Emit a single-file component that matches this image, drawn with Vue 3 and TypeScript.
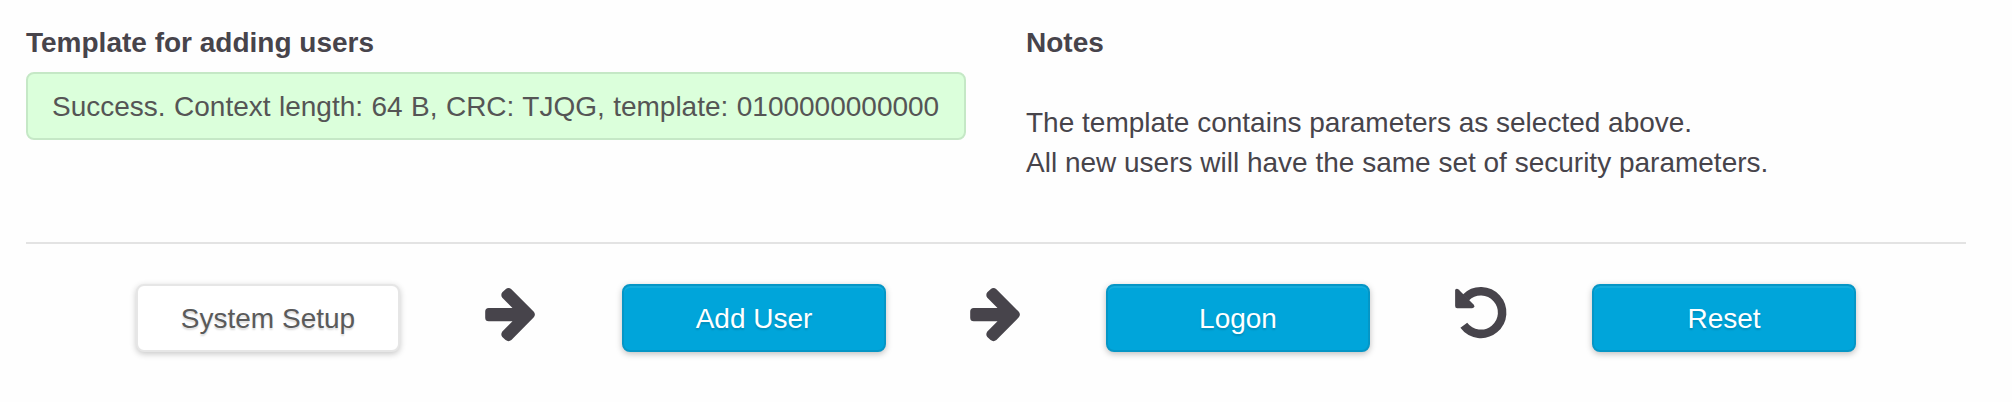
<script setup lang="ts">
interface Step {
  label: string
  primary: boolean
  next?: 'arrow' | 'undo'
}

const status = 'Success. Context length: 64 B, CRC: TJQG, template: 0100000000000'

const steps: Step[] = [
  { label: 'System Setup', primary: false, next: 'arrow' },
  { label: 'Add User', primary: true, next: 'arrow' },
  { label: 'Logon', primary: true, next: 'undo' },
  { label: 'Reset', primary: true },
]
</script>

<template>
  <main class="page">
    <section class="info">
      <div class="template">
        <h2 class="title">Template for adding users</h2>
        <div class="status"><span>{{ status }}</span></div>
      </div>
      <div class="notes">
        <h2 class="title">Notes</h2>
        <p class="text">
          <span class="line">The template contains parameters as selected above.</span>
          <span class="line">All new users will have the same set of security parameters.</span>
        </p>
      </div>
    </section>
    <nav class="steps">
      <template v-for="step in steps" :key="step.label">
        <div class="cell">
          <button type="button" class="button" :class="{ primary: step.primary }">{{ step.label }}</button>
        </div>
        <div v-if="step.next" class="cell">
          <svg v-if="step.next === 'arrow'" class="icon" width="56" height="60" viewBox="0 0 56 60">
            <path d="M5.700 24H29.500L19.300 13.800Q17.300 10.800 19.300 8.200L22.600 5.200Q25.500 2.900 28.400 5.200L50.600 27.600Q53.200 30.600 50.600 33.600L28.400 56Q25.500 58.300 22.600 56L19.300 53Q17.300 50.400 19.300 47.400L29.500 37.200H5.700Q2.200 37.200 2.200 33.700V27.500Q2.200 24 5.700 24Z" />
          </svg>
          <svg v-else class="icon" width="56" height="60" viewBox="0 0 56 60">
            <path class="ring" d="M10.800 41.300A21.300 21.300 0 1 0 12.900 13.400" />
            <path d="M2.100 6.600Q2.100 4.700 3.800 4.700Q4.700 4.700 5.600 5.500L20.300 20.200Q21.300 21.300 21.300 22.300Q21.100 24.300 19 24.300H4.300Q2.100 24.300 2.100 22.100Z" />
          </svg>
        </div>
      </template>
    </nav>
  </main>
</template>

<style>
body {
  margin: 0;
  background: #fefefe;
}
</style>

<style scoped>
.page {
  box-sizing: border-box;
  height: 402px;
  padding: 23px 46px 0 26px;
  font: 28px/40px "Liberation Sans", Arial, sans-serif;
  color: #47444b;
  overflow: hidden;
}
.info {
  box-sizing: border-box;
  display: grid;
  grid-template-columns: 940px 1fr;
  column-gap: 60px;
  height: 221px;
  border-bottom: 2px solid #e3e3e3;
}
.title {
  margin: 0;
  font-size: 28px;
  font-weight: 700;
  line-height: 40px;
}
.status {
  box-sizing: border-box;
  height: 68px;
  margin-top: 9px;
  padding: 0 24px;
  border: 2px solid #c5e8c6;
  border-radius: 8px;
  background: #dbffdb;
  color: #555;
  line-height: 66px;
  word-spacing: 0.65px;
  white-space: nowrap;
}
.text {
  margin: 40px 0 0;
}
.line {
  display: block;
  white-space: nowrap;
}
.steps {
  display: grid;
  grid-template-columns: 242px 244px 242px 242px 242px 244px 242px;
  justify-content: center;
  padding-top: 40px;
}
.cell {
  display: flex;
  justify-content: center;
}
.button {
  box-sizing: border-box;
  flex: none;
  width: 264px;
  height: 68px;
  padding: 0;
  border: 2px solid #e6e6e6;
  border-radius: 8px;
  background: #fff;
  box-shadow: 0 2px 6px rgba(0, 0, 0, 0.22);
  color: #5a5a5a;
  font: inherit;
  line-height: 66px;
  text-shadow: 0 2px 2px rgba(0, 0, 0, 0.15);
}
.primary {
  border-color: #0596c6;
  background: #00a5da;
  box-shadow: inset 0 2px 0 rgba(255, 255, 255, 0.08), 0 2px 6px rgba(0, 0, 0, 0.25);
  color: #fff;
}
.icon {
  display: block;
  flex: none;
  fill: currentColor;
}
.ring {
  fill: none;
  stroke: currentColor;
  stroke-width: 8.5;
}
</style>
